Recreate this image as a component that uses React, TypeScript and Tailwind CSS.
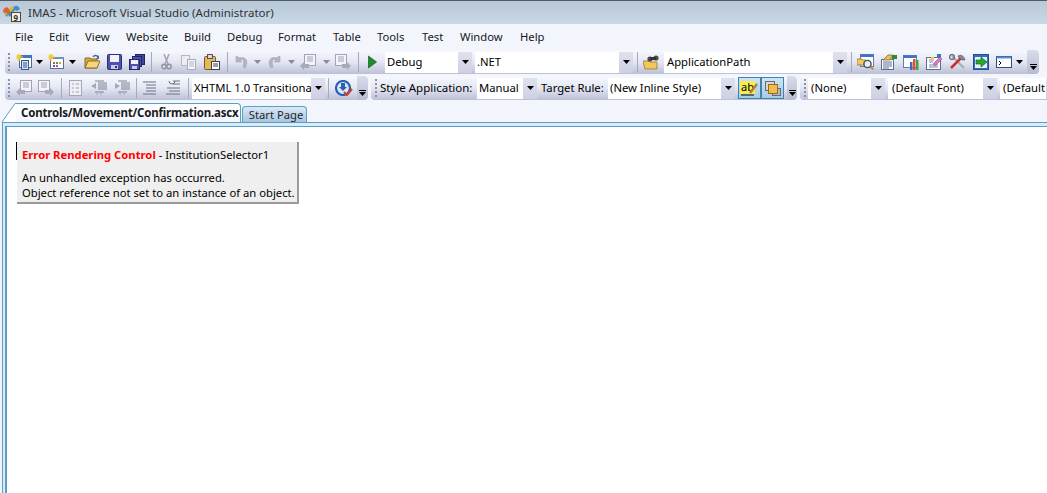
import React from "react";

const font = "font-['Noto_Sans',sans-serif]";

function Arrow({ muted, className = "" }: { muted?: boolean; className?: string }) {
  return (
    <svg width="7" height="4" viewBox="0 0 7 4" className={`shrink-0 ${className}`}>
      <path d="M0 0h7L3.5 4z" fill={muted ? "#8a8a95" : "#000"} />
    </svg>
  );
}

function Sep({ className = "" }: { className?: string }) {
  return <div className={`h-[20px] w-px shrink-0 bg-[#a5a9bc] ${className}`} />;
}

function Overflow({ className = "", w = "w-[12px]" }: { className?: string; w?: string }) {
  return (
    <div className={`${w} ${className} flex h-full shrink-0 flex-col items-center justify-end gap-px rounded-r-[4px] bg-gradient-to-b from-[#d9dcea] to-[#b7bbd1] pb-[4px]`}>
      <div className="h-px w-[7px] bg-black" />
      <Arrow />
    </div>
  );
}

function Grip({ className = "" }: { className?: string }) {
  return (
    <div className={`flex w-[2px] shrink-0 flex-col gap-[2px] ${className}`}>
      {[0, 1, 2, 3, 4].map((i) => (
        <div key={i} className="h-[2px] w-[2px] bg-[#8d91a8]" />
      ))}
    </div>
  );
}

function Combo({ w, text, className = "", pad = "pl-[2px]" }: { w: string; text: string; className?: string; pad?: string }) {
  return (
    <div className={`${w} ${className} flex h-[21px] shrink-0 items-stretch bg-white`}>
      <div className={`min-w-0 flex-1 overflow-hidden whitespace-nowrap ${pad} text-[11.25px] leading-[20px] text-black`}>{text}</div>
      <div className="flex w-[14px] shrink-0 items-center justify-center bg-gradient-to-b from-[#dfe1ef] to-[#cdd0e3]">
        <Arrow />
      </div>
    </div>
  );
}

function Ico({ children, w = 16, className = "" }: { children: React.ReactNode; w?: number; className?: string }) {
  return (
    <svg width={w} height="16" viewBox={`0 0 ${w} 16`} className={`shrink-0 ${className}`}>
      {children}
    </svg>
  );
}

type P = { className?: string };

const IconNewProject = ({ className }: P) => (
  <Ico className={className}>
    <rect x="3.5" y="1.5" width="12" height="12" fill="#fff" stroke="#4a6a9c" />
    <rect x="3" y="1" width="13" height="3" fill="#3f74c4" />
    <rect x="5.5" y="6.5" width="7" height="9" fill="#d7e3f5" stroke="#34598f" />
    <path d="M7 9h4M7 11h4M7 13h4" stroke="#34598f" />
    <path d="M3 0v7M0 3h7M1 1l4 4M5 1L1 5" stroke="#f5c92c" strokeWidth="1.2" />
  </Ico>
);
const IconAddItem = ({ className }: P) => (
  <Ico w={17} className={className}>
    <rect x="2.5" y="3.5" width="13" height="11" fill="#fff" stroke="#5a6f92" />
    <rect x="2" y="3" width="14" height="2" fill="#6f8fc4" />
    <rect x="5" y="8" width="2" height="2" fill="#e04a3a" />
    <rect x="8" y="8" width="2" height="2" fill="#3aa64a" />
    <rect x="11" y="8" width="2" height="2" fill="#e0a52a" />
    <rect x="5" y="11" width="2" height="2" fill="#3a6ac8" />
    <rect x="8" y="11" width="2" height="2" fill="#c84aa0" />
    <path d="M3 0v7M0 3h7M1 1l4 4M5 1L1 5" stroke="#f5c92c" strokeWidth="1.2" />
  </Ico>
);
const IconOpen = ({ className }: P) => (
  <Ico className={className}>
    <path d="M1 4h5l1 1h6v9H1z" fill="#d9a93c" stroke="#8f6a1e" />
    <path d="M1 14l3-7h12l-3 7z" fill="#f5d57c" stroke="#8f6a1e" />
    <path d="M9 3c1-2 4-2 5 0" fill="none" stroke="#3d6aa5" strokeWidth="1.4" />
    <path d="M15 1v4h-3z" fill="#3d6aa5" />
  </Ico>
);
const IconSave = ({ className }: P) => (
  <Ico w={15} className={className}>
    <rect x="0.5" y="0.5" width="14" height="15" rx="1" fill="#4c52ad" stroke="#2a2e72" />
    <rect x="3" y="1" width="9" height="7" fill="#f2f3fa" />
    <rect x="4" y="11" width="7" height="4" fill="#c9cbe0" />
    <rect x="8" y="12" width="2" height="2" fill="#2a2e72" />
  </Ico>
);
const IconSaveAll = ({ className }: P) => (
  <Ico className={className}>
    <rect x="6.5" y="0.5" width="9" height="10" fill="#3f4598" stroke="#22265e" />
    <rect x="3.5" y="2.5" width="9" height="10" fill="#4c52ad" stroke="#22265e" />
    <rect x="0.5" y="5.5" width="10" height="10" fill="#4c52ad" stroke="#22265e" />
    <rect x="2" y="6" width="7" height="4" fill="#f2f3fa" />
    <rect x="3" y="12" width="5" height="3" fill="#c9cbe0" />
  </Ico>
);
const IconCut = ({ className }: P) => (
  <Ico w={11} className={className}>
    <path d="M3 0l4 10M8 0L4 10" stroke="#a3a5b0" strokeWidth="1.5" fill="none" />
    <circle cx="3" cy="12.5" r="2.2" fill="none" stroke="#8f919f" strokeWidth="1.4" />
    <circle cx="8" cy="12.5" r="2.2" fill="none" stroke="#8f919f" strokeWidth="1.4" />
  </Ico>
);
const IconCopy = ({ className }: P) => (
  <Ico w={15} className={className}>
    <rect x="0.5" y="1.5" width="8" height="10" fill="#eceef5" stroke="#b4b6c4" />
    <rect x="6.5" y="5.5" width="8" height="10" fill="#f4f5fa" stroke="#a9abba" />
    <path d="M8 8h5M8 10h5M8 12h5" stroke="#b4b6c4" />
  </Ico>
);
const IconPaste = ({ className }: P) => (
  <Ico className={className}>
    <rect x="0.5" y="2.5" width="11" height="13" rx="1" fill="#e5b85a" stroke="#7d5a1e" />
    <rect x="3.5" y="0.5" width="5" height="4" fill="#d9d9d9" stroke="#555" />
    <rect x="7.5" y="7.5" width="8" height="8" fill="#fff" stroke="#3b3f55" />
    <path d="M9 10h5M9 12h5" stroke="#3b3f55" />
  </Ico>
);
const IconUndo = ({ className }: P) => (
  <Ico w={13} className={className}>
    <path d="M1 2v6h6L5 6c3-2 5 1 3 7l2 1c4-6 1-12-5-10z" fill="#b3b5c4" stroke="#9a9cac" strokeWidth="0.5" />
  </Ico>
);
const IconRedo = ({ className }: P) => (
  <Ico w={13} className={className}>
    <path d="M12 2v6H6l2-2c-3-2-5 1-3 7l-2 1C-1 8 2 2 8 4z" fill="#b3b5c4" stroke="#9a9cac" strokeWidth="0.5" />
  </Ico>
);
const IconNavBack = ({ className }: P) => (
  <Ico className={className}>
    <rect x="4.5" y="0.5" width="11" height="11" fill="#f3f4fa" stroke="#a2a4b6" />
    <path d="M7 3h6M7 5h6M7 7h6" stroke="#a2a4b6" />
    <path d="M0 12l4-4v2h5v4H4v2z" fill="#a8aaba" />
  </Ico>
);
const IconNavFwd = ({ className }: P) => (
  <Ico className={className}>
    <rect x="0.5" y="0.5" width="11" height="11" fill="#f3f4fa" stroke="#a2a4b6" />
    <path d="M3 3h6M3 5h6M3 7h6" stroke="#a2a4b6" />
    <path d="M16 12l-4-4v2H7v4h5v2z" fill="#a8aaba" />
  </Ico>
);
const IconPlay = ({ className }: P) => (
  <Ico w={9} className={className}>
    <path d="M0.5 2v12l8-6z" fill="#1f8a2e" stroke="#135f1d" strokeWidth="0.7" />
  </Ico>
);
const IconFind = ({ className }: P) => (
  <Ico w={17} className={className}>
    <path d="M0 7h6l1 1h7v7H2z" fill="#f2c75c" stroke="#8f6a1e" strokeWidth="0.7" />
    <circle cx="7" cy="5" r="2.6" fill="#4b4b4b" />
    <circle cx="13" cy="4" r="2.6" fill="#4b4b4b" />
    <rect x="7" y="3" width="6" height="3" fill="#333" />
  </Ico>
);
const IconProps = ({ className }: P) => (
  <Ico w={17} className={className}>
    <rect x="3.5" y="0.5" width="13" height="12" fill="#fff" stroke="#5f7fb1" />
    <rect x="3.5" y="0.5" width="13" height="2.5" fill="#3f74c4" />
    <path d="M0 11V5h5l1 1h3v5z" fill="#f2c75c" stroke="#8f6a1e" strokeWidth="0.7" />
    <circle cx="10.5" cy="10" r="3.6" fill="#dff0fb" stroke="#454a5a" strokeWidth="1.4" />
    <path d="M13.5 13l3 2.5" stroke="#c8932a" strokeWidth="2" />
  </Ico>
);
const IconHand = ({ className }: P) => (
  <Ico w={17} className={className}>
    <rect x="1.5" y="5.5" width="12" height="10" fill="#fff" stroke="#5a6f92" />
    <path d="M3 8h9M3 10h9M3 12h9M3 14h6" stroke="#5a6f92" />
    <path d="M3 6l5-5h5l-3 5z" fill="#e8be58" stroke="#7d5a1e" strokeWidth="0.7" />
    <rect x="12" y="1" width="5" height="4" fill="#2e8a3a" />
  </Ico>
);
const IconChart = ({ className }: P) => (
  <Ico w={17} className={className}>
    <rect x="0.5" y="1.5" width="13" height="12" fill="#fff" stroke="#5f7fb1" />
    <rect x="0.5" y="1.5" width="13" height="2.5" fill="#3f74c4" />
    <rect x="7" y="8" width="2.5" height="8" fill="#3a6ac8" />
    <rect x="10" y="5" width="2.5" height="11" fill="#e0502f" />
    <rect x="13" y="6" width="2.5" height="10" fill="#3aa64a" />
  </Ico>
);
const IconWand = ({ className }: P) => (
  <Ico w={17} className={className}>
    <rect x="0.5" y="3.5" width="14" height="12" fill="#fff" stroke="#5a6f92" />
    <path d="M3 6h5M3 8h4M3 11h9M3 13h9" stroke="#7a86a6" />
    <path d="M7 10l7-7 2 2-7 7z" fill="#d879c8" stroke="#8a3f7c" strokeWidth="0.5" />
    <rect x="11" y="0" width="4" height="3" fill="#3f74c4" />
    <rect x="5" y="3" width="3" height="3" fill="#f2c75c" />
  </Ico>
);
const IconTools = ({ className }: P) => (
  <Ico w={17} className={className}>
    <path d="M3 2l12 12" stroke="#a9adb8" strokeWidth="2.2" />
    <path d="M12 4L2 14" stroke="#c9302a" strokeWidth="2.5" />
    <path d="M9 2c3-2 6 0 7 4l-3 0-3-2z" fill="#868a96" stroke="#3a3d48" strokeWidth="0.5" />
    <circle cx="3" cy="3" r="2.4" fill="none" stroke="#6a6e7a" strokeWidth="1.4" />
  </Ico>
);
const IconGo = ({ className }: P) => (
  <Ico className={className}>
    <rect x="0.5" y="0.5" width="15" height="15" fill="#2f6fc4" stroke="#234f8e" />
    <rect x="2" y="3" width="12" height="11" fill="#e8f0fa" />
    <path d="M3 6h5V3l6 5-6 5v-3H3z" fill="#27a82f" stroke="#14661a" strokeWidth="0.7" />
  </Ico>
);
const IconConsole = ({ className }: P) => (
  <Ico className={className}>
    <rect x="0.5" y="2.5" width="15" height="11" fill="#fff" stroke="#2b4f87" />
    <rect x="0.5" y="2.5" width="15" height="2" fill="#5f8ed0" />
    <path d="M3 7l2 2-2 2" stroke="#000" fill="none" />
  </Ico>
);
const IconIndentDoc = ({ className }: P) => (
  <Ico w={14} className={className}>
    <rect x="0.5" y="0.5" width="12" height="15" fill="#eef0f6" stroke="#a5a8ba" />
    <path d="M3 4h2M7 4h3M3 8h2M7 8h3M3 12h2M7 12h3" stroke="#9b9eb0" />
  </Ico>
);
const IconOutdent = ({ className }: P) => (
  <Ico className={className}>
    <path d="M7 3h9M7 5h9M7 7h9M7 9h9M4 12h9M4 1h9" stroke="#7e8195" />
    <path d="M0 6l5-3v6z" fill="#a5a8ba" />
    <path d="M5 14h2M9 14h2" stroke="#a5a8ba" />
  </Ico>
);
const IconIndent = ({ className }: P) => (
  <Ico className={className}>
    <path d="M7 3h9M7 5h9M7 7h9M7 9h9M4 12h9M4 1h9" stroke="#7e8195" />
    <path d="M6 6L1 3v6z" fill="#a5a8ba" />
    <path d="M5 14h2M9 14h2" stroke="#a5a8ba" />
  </Ico>
);
const IconLines = ({ className }: P) => (
  <Ico w={14} className={className}>
    <path d="M0 2h13M3 5h10M3 8h10M3 11h10M0 14h13" stroke="#6e7186" />
  </Ico>
);
const IconLines2 = ({ className }: P) => (
  <Ico w={14} className={className}>
    <path d="M3 1a3 3 0 106 0" stroke="#6e7186" fill="none" />
    <path d="M1 8h13M3 11h11M0 14h14M7 1h7M7 4h7" stroke="#6e7186" />
  </Ico>
);
const IconValidate = ({ className }: P) => (
  <Ico w={18} className={className}>
    <circle cx="8" cy="8" r="7" fill="#dbe8f8" stroke="#2b5fb4" strokeWidth="2.2" />
    <path d="M6 3h4v4h2l-4 4-4-4h2z" fill="#2b5fb4" />
    <path d="M9 12l3 3 5-6" stroke="#dd3a25" strokeWidth="2" fill="none" />
  </Ico>
);
const IconHighlight = () => (
  <Ico w={19}>
    <rect x="0" y="1" width="15" height="13" fill="#f6ee50" />
    <text x="1" y="11" fontSize="11" fontFamily="Noto Sans, sans-serif" fill="#000">ab</text>
    <path d="M10 13l7-9" stroke="#b77a38" strokeWidth="2.4" />
    <path d="M1 15h13" stroke="#000" />
  </Ico>
);
const IconLayers = () => (
  <Ico w={18}>
    <rect x="1.5" y="1.5" width="9" height="9" fill="#d8d8dc" stroke="#6a6a72" />
    <rect x="8.5" y="8.5" width="8" height="7" fill="#b9b9c0" stroke="#6a6a72" />
    <rect x="4.5" y="4.5" width="9" height="9" fill="#f0bd4e" stroke="#96691b" />
  </Ico>
);

function Strip({ className, children }: { className: string; children: React.ReactNode }) {
  return (
    <div className={`flex h-[24px] shrink-0 items-center overflow-hidden rounded-[4px] bg-gradient-to-b from-[#f7f8ff] via-[#e4e6f2] to-[#bcc0d5] ${className}`}>
      {children}
    </div>
  );
}

function Highlighted({ children, className = "" }: { children: React.ReactNode; className?: string }) {
  return (
    <div className={`flex h-[22px] w-[23px] shrink-0 items-center justify-center border border-[#3a86ac] bg-gradient-to-b from-[#cfe3f2] to-[#a7cce4] ${className}`}>
      {children}
    </div>
  );
}

export default function App() {
  const menus = ["File", "Edit", "View", "Website", "Build", "Debug", "Format", "Table", "Tools", "Test", "Window", "Help"];
  return (
    <div className={`${font} flex h-[493px] w-[1047px] flex-col overflow-hidden bg-[#f3f5fd] text-[11.25px] text-black`}>
      <div className="flex h-[24px] shrink-0 items-center gap-[7px] border-t border-[#55585f] bg-gradient-to-b from-[#b7c8d6] to-[#cad8e5] pl-[3px]">
        <svg width="18" height="18" viewBox="0 0 18 18" className="shrink-0">
          <path d="M0 7c1-4 4-5 6-2l2 3-3 3C3 8 2 8 1 9z" fill="#e0602a" />
          <path d="M5 11l5-7c2-3 5-3 7 1l-3 2c-1-1-2-1-3 0l-4 6z" fill="#3f8fd0" />
          <path d="M6 5l3-3 2 2-3 4z" fill="#e8b23a" />
          <path d="M1 9l4 2-1 2z" fill="#5a9a3a" />
          <rect x="8.5" y="8.5" width="9" height="9" fill="#f5efe0" stroke="#4f4732" />
          <text x="10.5" y="16.5" fontSize="8" fontWeight="700" fontFamily="Noto Sans, sans-serif" fill="#333">9</text>
        </svg>
        <span className="whitespace-nowrap text-[11.5px] text-[#2f3338]">IMAS - Microsoft Visual Studio (Administrator)</span>
      </div>

      <div className="flex h-[26px] shrink-0 items-center pl-[15px] text-[#14171c]">
        <div className="grid grid-cols-[34px_36px_41px_58px_43px_51px_55px_44px_45px_38px_60px_40px]">
          {menus.map((m) => (
            <span key={m} className="whitespace-nowrap">{m}</span>
          ))}
        </div>
      </div>

      <div className="flex shrink-0 pl-[5px]">
        <Strip className="w-[1034px]">
          <Grip className="ml-[3px]" />
          <IconNewProject className="ml-[6px]" />
          <Arrow className="ml-[4px]" />
          <IconAddItem className="ml-[5px]" />
          <Arrow className="ml-[4px]" />
          <IconOpen className="ml-[8px]" />
          <IconSave className="ml-[7px]" />
          <IconSaveAll className="ml-[7px]" />
          <Sep className="ml-[6px]" />
          <IconCut className="ml-[9px]" />
          <IconCopy className="ml-[9px]" />
          <IconPaste className="ml-[8px]" />
          <Sep className="ml-[7px]" />
          <IconUndo className="ml-[7px]" />
          <Arrow muted className="ml-[6px]" />
          <IconRedo className="ml-[7px]" />
          <Arrow muted className="ml-[7px]" />
          <IconNavBack className="ml-[5px]" />
          <Arrow muted className="ml-[7px]" />
          <IconNavFwd className="ml-[5px]" />
          <Sep className="ml-[7px]" />
          <IconPlay className="ml-[9px]" />
          <Combo w="w-[87px]" text="Debug" className="ml-[8px]" />
          <Combo w="w-[158px]" text=".NET" className="ml-[3px]" />
          <Sep className="ml-[4px]" />
          <IconFind className="ml-[5px]" />
          <Combo w="w-[183px]" text="ApplicationPath" className="ml-[4px]" pad="pl-[3px]" />
          <Sep className="ml-[4px]" />
          <IconProps className="ml-[5px]" />
          <IconHand className="ml-[6px]" />
          <IconChart className="ml-[6px]" />
          <IconWand className="ml-[6px]" />
          <IconTools className="ml-[6px]" />
          <IconGo className="ml-[7px]" />
          <IconConsole className="ml-[7px]" />
          <Arrow className="ml-[4px]" />
          <Overflow className="ml-[4px]" />
        </Strip>
      </div>

      <div className="mt-[2px] flex shrink-0 gap-[3px] pl-[5px]">
        <Strip className="w-[363px]">
          <Grip className="ml-[3px]" />
          <IconNavBack className="ml-[6px]" />
          <IconNavFwd className="ml-[6px]" />
          <Sep className="ml-[7px]" />
          <IconIndentDoc className="ml-[7px]" />
          <IconOutdent className="ml-[8px]" />
          <IconIndent className="ml-[7px]" />
          <Sep className="ml-[6px]" />
          <IconLines className="ml-[6px]" />
          <IconLines2 className="ml-[9px]" />
          <Sep className="ml-[8px]" />
          <Combo w="w-[133px]" text="XHTML 1.0 Transitional" className="ml-[3px]" />
          <Sep className="ml-[3px]" />
          <IconValidate className="ml-[6px]" />
          <Overflow className="ml-[4px]" w="w-[11px]" />
        </Strip>
        <Strip className="w-[426px]">
          <Grip className="ml-[4px]" />
          <span className="ml-[3px] w-[93px] shrink-0 whitespace-nowrap text-[11.5px]">Style Application:</span>
          <Combo w="w-[60px]" text="Manual" className="ml-[4px]" />
          <span className="ml-[4px] w-[63px] shrink-0 whitespace-nowrap">Target Rule:</span>
          <Combo w="w-[127px]" text="(New Inline Style)" className="ml-[4px]" />
          <Highlighted className="ml-[3px]"><IconHighlight /></Highlighted>
          <Highlighted><IconLayers /></Highlighted>
          <Overflow className="ml-[3px]" w="w-[10px]" />
        </Strip>
        <Strip className="w-[260px] rounded-r-none">
          <Grip className="ml-[4px]" />
          <Combo w="w-[77px]" text="(None)" className="ml-[2px]" pad="pl-[3px]" />
          <Combo w="w-[109px]" text="(Default Font)" className="ml-[3px]" pad="pl-[4px]" />
          <Combo w="w-[60px]" text="(Default" className="ml-[3px]" pad="pl-[3px]" />
        </Strip>
      </div>

      <div className="mt-[3px] flex h-[19px] shrink-0 items-end">
        <svg width="16" height="19" viewBox="0 0 16 19" className="shrink-0">
          <path d="M2 19L15 0.5H16V19z" fill="#fff" />
          <path d="M2 19L15 0.5H16" fill="none" stroke="#5a9fc5" />
        </svg>
        <div className="flex h-[19px] w-[225px] items-center rounded-tr-[4px] border-r border-t border-[#5a9fc5] bg-gradient-to-b from-white to-[#f3f5fd] pl-[5px] text-[11.5px] font-bold tracking-[-0.2px] text-[#16181c]">
          <span className="whitespace-nowrap">Controls/Movement/Confirmation.ascx</span>
        </div>
        <div className="ml-px flex h-[16px] w-[65px] items-center justify-center rounded-t-[4px] border border-b-0 border-[#5a9fc5] bg-gradient-to-b from-[#dbe8f4] to-[#a9c6de] pl-[3px] pt-px text-[#22262c]">
          Start Page
        </div>
      </div>

      <div className="flex min-h-0 flex-1 flex-col pl-[2px]">
        <div className="flex min-h-0 flex-1 flex-col border-l border-t border-[#5a9fc5] bg-[#dbeaf6] pl-[2px] pt-[3px]">
          <div className="min-h-0 flex-1 border-l-2 border-t border-[#5a9fc5] bg-white pl-[9px] pt-[15px]">
            <div className="flex w-[283px]">
              <div className="h-[18px] w-px shrink-0 bg-black" />
              <div className="h-[62px] w-[282px] border-b-2 border-r-2 border-[#9a9a9a] bg-[#efefef] pl-[5px] pt-[5px] leading-[15px] text-black">
                <div className="whitespace-nowrap"><span className="font-bold text-[#ff0000]">Error Rendering Control</span> - InstitutionSelector1</div>
                <div className="mt-[8px] whitespace-nowrap">An unhandled exception has occurred.</div>
                <div className="whitespace-nowrap">Object reference not set to an instance of an object.</div>
              </div>
            </div>
          </div>
        </div>
      </div>
    </div>
  );
}
